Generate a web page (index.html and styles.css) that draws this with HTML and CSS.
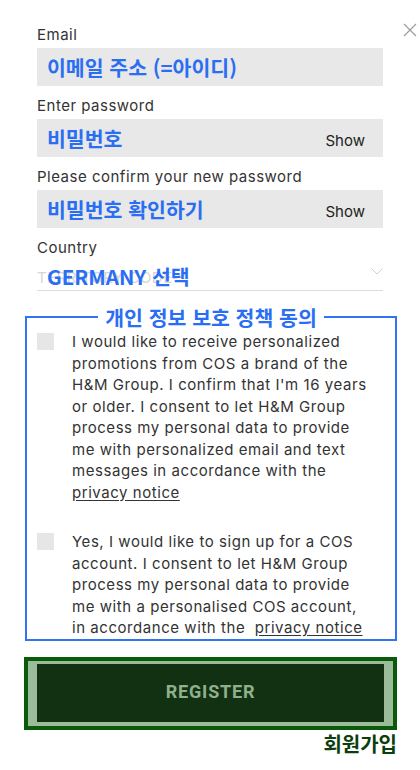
FILE: index.html
```html
<!DOCTYPE html>
<html lang="ko">
<head>
    <meta charset="UTF-8">
    <meta name="viewport" content="width=device-width, initial-scale=1.0">
    <title>Register</title>
    <link rel="stylesheet" href="styles.css">
</head>
<body>
    <div class="page">
        <button class="close" aria-label="Close">
            <svg width="14" height="14" viewBox="0 0 14 14"><path d="M1 1L13 13M13 1L1 13" stroke="#9a9a9a" stroke-width="1.1" fill="none"/></svg>
        </button>

        <form class="form">
            <div class="field">
                <label class="label">Email</label>
                <div class="input"><span class="note">이메일 주소 (=아이디)</span></div>
            </div>
            <div class="field">
                <label class="label">Enter password</label>
                <div class="input"><span class="note">비밀번호</span><span class="show">Show</span></div>
            </div>
            <div class="field">
                <label class="label">Please confirm your new password</label>
                <div class="input"><span class="note">비밀번호 확인하기</span><span class="show">Show</span></div>
            </div>
            <div class="field">
                <label class="label">Country</label>
                <div class="select">
                    <div class="select-value">
                        <span class="placeholder">TERRITORY CODE</span>
                        <span class="note country">GERMANY 선택</span>
                    </div>
                    <svg class="chevron" width="12" height="7" viewBox="0 0 12 7"><path d="M0.5 0.5L6 6L11.5 0.5" stroke="#cfcfcf" stroke-width="1" fill="none"/></svg>
                </div>
            </div>
        </form>

        <fieldset class="consent">
            <legend class="legend">개인 정보 보호 정책 동의</legend>
            <div class="check-row">
                <span class="checkbox"></span>
                <p class="check-text">I would like to receive personalized promotions from COS a brand of the H&amp;M Group. I confirm that I'm 16 years or older. I consent to let H&amp;M Group process my personal data to provide me with personalized email and text messages in accordance with the <a href="#">privacy notice</a></p>
            </div>
            <div class="check-row second">
                <span class="checkbox"></span>
                <p class="check-text">Yes, I would like to sign up for a COS account. I consent to let H&amp;M Group process my personal data to provide me with a personalised COS account, in accordance with the&nbsp; <a href="#">privacy notice</a></p>
            </div>
        </fieldset>

        <div class="register-box">
            <button class="register">REGISTER</button>
        </div>
        <div class="register-note">회원가입</div>
    </div>
</body>
</html>
```

FILE: styles.css
```css
body {
    margin: 0;
    background: #fff;
    font-family: Inter, "Noto Sans", sans-serif;
    color: #333;
}
.page {
    position: relative;
    width: 420px;
    padding-top: 25px;
}
.close {
    position: absolute;
    top: 23px;
    right: 3px;
    background: none;
    border: none;
    padding: 0;
    width: 14px;
    height: 14px;
    cursor: pointer;
}
.form {
    margin: 0 37px;
    width: 346px;
}
.field {
    display: flex;
    flex-direction: column;
    margin-bottom: 10px;
}
.label {
    font-size: 15px;
    line-height: 20px;
    color: #333;
    margin-bottom: 3px;
    letter-spacing: 0.5px;
}
.input {
    height: 38px;
    background: #e8e8e8;
    display: flex;
    align-items: center;
    justify-content: space-between;
    padding: 0 18px 0 10px;
}
.note {
    font-family: "Noto Sans CJK KR", Inter, sans-serif;
    font-weight: 700;
    font-size: 20.5px;
    color: #2a6ef3;
    line-height: 24px;
}
.show {
    font-size: 15px;
    color: #222;
    padding-top: 4px;
}
.select {
    height: 32px;
    display: flex;
    align-items: center;
    justify-content: space-between;
    border-bottom: 1px solid #dcdcdc;
    margin-top: -3px;
}
.select-value {
    display: grid;
    align-items: center;
}
.placeholder,
.country {
    grid-area: 1 / 1;
}
.placeholder {
    font-size: 15px;
    color: #d6d6d6;
    padding-top: 6px;
    letter-spacing: 0.5px;
}
.country {
    padding-left: 10px;
    padding-top: 4px;
}
.chevron {
    margin-bottom: 5px;
}
.consent {
    margin: 15px 0 0 25px;
    width: 372px;
    box-sizing: border-box;
    border: 2px solid #3174f2;
    padding: 3px 10px 0;
}
.legend {
    margin: 0 auto;
    padding: 0 7px;
    font-family: "Noto Sans CJK KR", sans-serif;
    font-weight: 700;
    font-size: 20.5px;
    line-height: 22px;
    color: #2a6ef3;
}
.check-row {
    display: flex;
    align-items: flex-start;
    gap: 18px;
    padding-right: 12px;
}
.check-row.second {
    margin-top: 28px;
}
.checkbox {
    flex: none;
    width: 17px;
    height: 17px;
    background: #e6e6e6;
    margin-top: 2px;
}
.check-text {
    margin: 0;
    font-size: 15px;
    line-height: 21.5px;
    letter-spacing: 0.55px;
    color: #333;
}
.check-text a {
    color: #333;
    text-decoration: underline;
    text-underline-offset: 2px;
}
.register-box {
    margin: 16px 0 0 24px;
    width: 373px;
    box-sizing: border-box;
    border: 4px solid #0b5a0b;
    background: #9cbb9a;
    padding: 3px 9px 4px;
}
.register {
    display: block;
    width: 100%;
    height: 58px;
    border: none;
    background: #123012;
    color: #8fb08c;
    font-family: Roboto, Inter, sans-serif;
    font-weight: 700;
    font-size: 18px;
    letter-spacing: 0.8px;
    padding: 0 0 3px;
    cursor: pointer;
}
.register-note {
    width: 397px;
    text-align: right;
    font-family: "Noto Sans CJK KR", sans-serif;
    font-weight: 700;
    font-size: 20px;
    line-height: 28px;
    color: #0b3f0b;
}
```
